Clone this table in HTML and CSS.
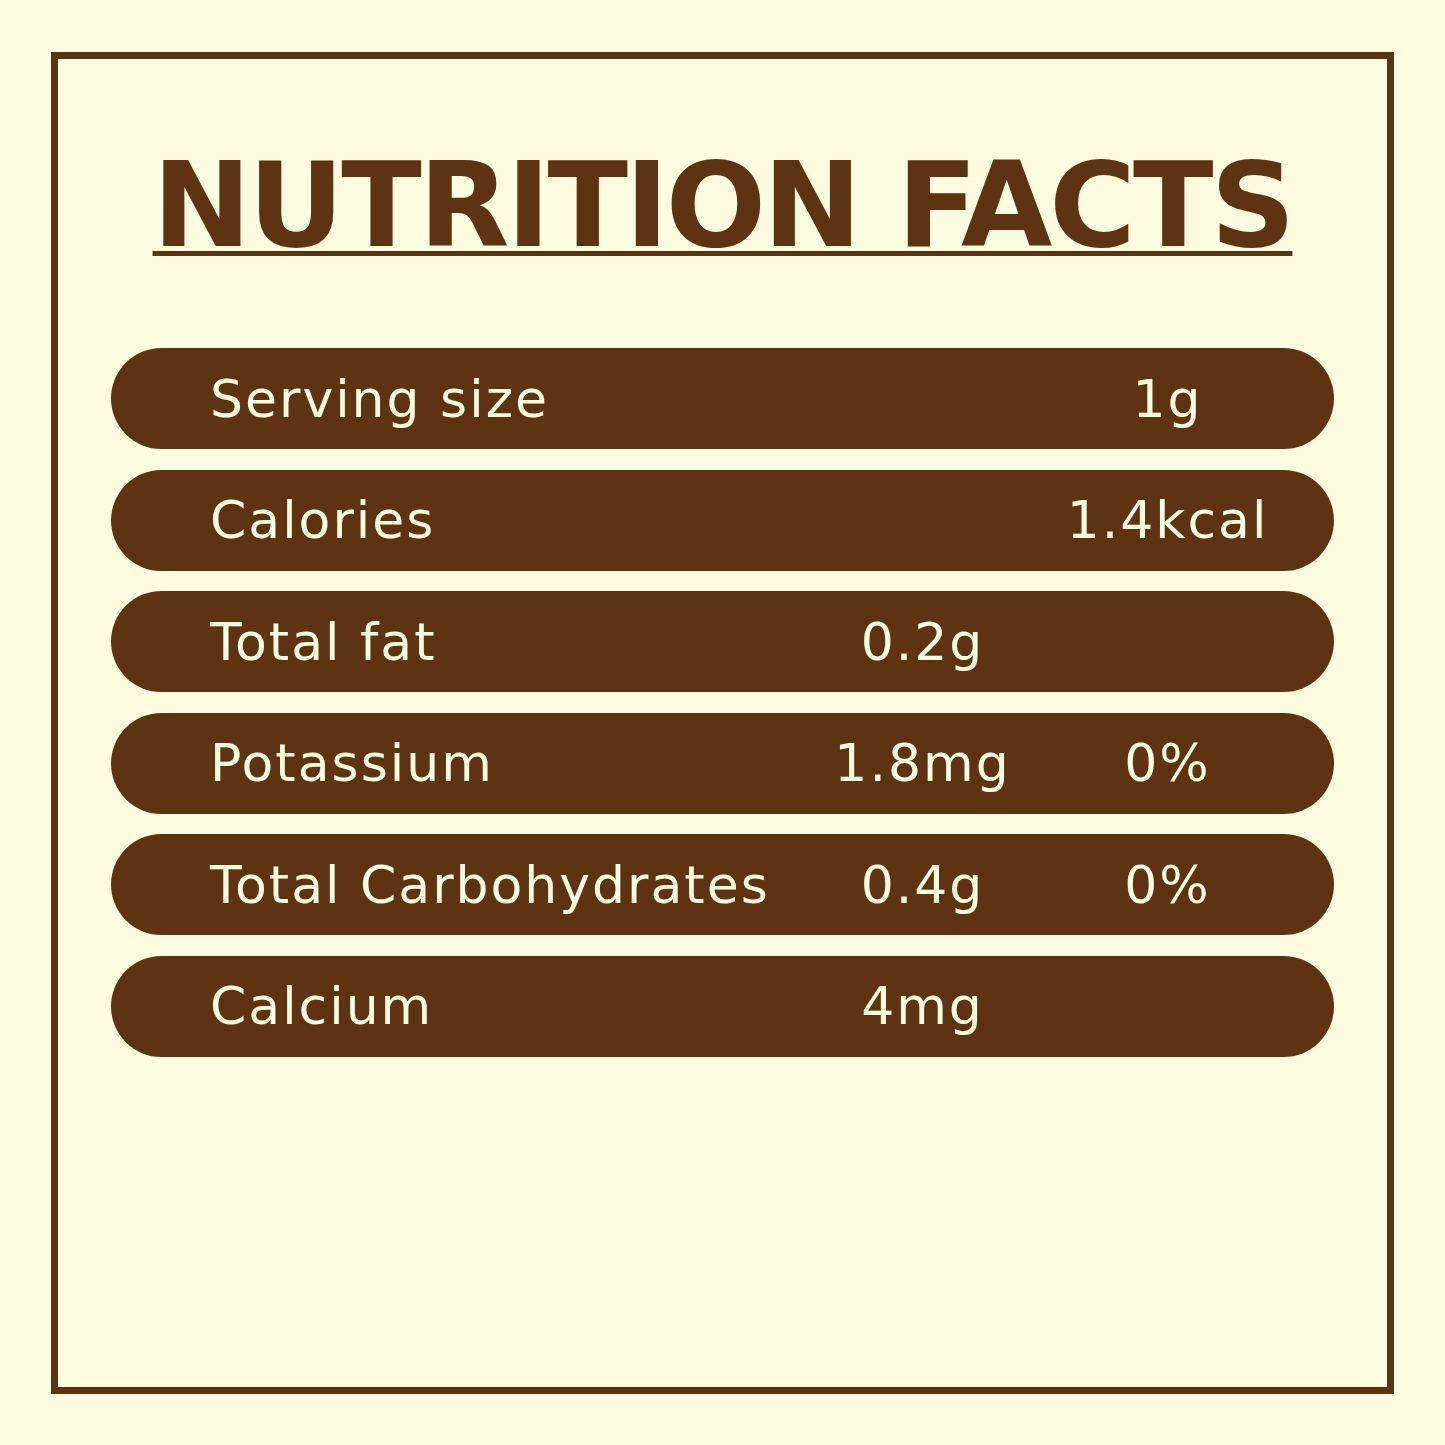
FILE: index.html
```html
<!DOCTYPE html>
<html>
<head>
<meta charset="utf-8">
<link rel="stylesheet" href="styles.css">
</head>
<body>
<div class="frame">
  <h1 class="title"><span class="title-text">NUTRITION FACTS</span></h1>
  <div class="rows">
    <div class="row"><span class="label">Serving size</span><span class="val"></span><span class="pct">1g</span></div>
    <div class="row"><span class="label">Calories</span><span class="val"></span><span class="pct">1.4kcal</span></div>
    <div class="row"><span class="label">Total fat</span><span class="val">0.2g</span><span class="pct"></span></div>
    <div class="row"><span class="label">Potassium</span><span class="val">1.8mg</span><span class="pct">0%</span></div>
    <div class="row"><span class="label">Total Carbohydrates</span><span class="val">0.4g</span><span class="pct">0%</span></div>
    <div class="row"><span class="label">Calcium</span><span class="val">4mg</span><span class="pct"></span></div>
  </div>
</div>
</body>
</html>
```

FILE: styles.css
```css
html, body {
  margin: 0;
  padding: 0;
  background: #fefcdf;
}
body {
  padding: 52px 51px;
  font-family: "DejaVu Sans", sans-serif;
}
.frame {
  box-sizing: border-box;
  width: 1343px;
  height: 1342px;
  border: 7px solid #5e3313;
  padding: 0 53px;
  display: flex;
  flex-direction: column;
  align-items: stretch;
}
.title {
  margin: 87px 0 0;
  text-align: center;
  font-size: 118px;
  line-height: 118px;
  font-weight: bold;
  color: #5e3313;
  letter-spacing: -3px;
}
.title-text {
  text-decoration: underline;
  text-decoration-thickness: 5px;
  text-underline-offset: 5px;
}
.rows {
  margin-top: 84px;
  display: flex;
  flex-direction: column;
  gap: 20.6px;
}
.row {
  height: 101px;
  border-radius: 51px;
  background: #5e3313;
  color: #fefcdf;
  display: grid;
  grid-template-columns: 1fr 245px 245px;
  align-items: center;
  padding: 0 44px 0 99px;
  font-size: 52px;
  letter-spacing: 2px;
}
.label {
  white-space: nowrap;
}
.val, .pct {
  text-align: center;
  white-space: nowrap;
}
```
